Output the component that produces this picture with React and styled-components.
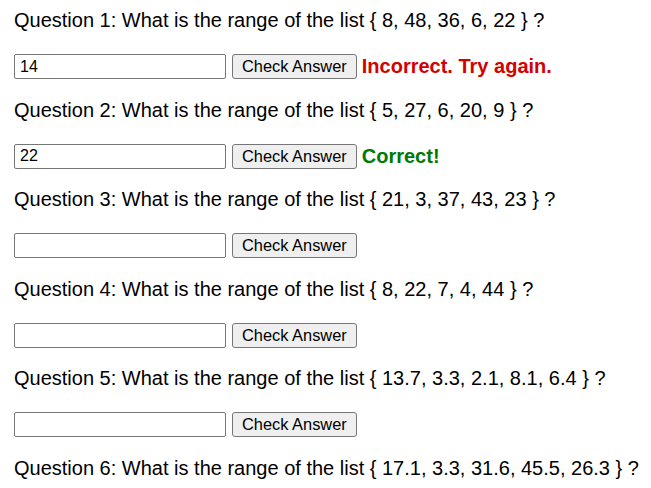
import React from 'react';
import styled, { createGlobalStyle } from 'styled-components';

const GlobalStyle = createGlobalStyle`
  body {
    margin: 0;
    background: #ffffff;
    font-family: "Liberation Sans", Arial, sans-serif;
    color: #000000;
  }
`;

const Page = styled.div`
  padding: 9px 14px;
  display: flex;
  flex-direction: column;
  gap: 19.6px;
`;

const QuestionBlock = styled.div`
  display: flex;
  flex-direction: column;
`;

const QuestionText = styled.div`
  font-size: 20px;
  line-height: 23px;
  margin-bottom: 22px;
  white-space: nowrap;
`;

const AnswerRow = styled.div`
  display: flex;
  align-items: center;
  height: 25px;
`;

const AnswerInput = styled.input`
  box-sizing: border-box;
  width: 212px;
  height: 25px;
  padding: 1px 5px;
  font-family: "Liberation Sans", Arial, sans-serif;
  font-size: 16px;
  color: #000000;
  border: 1px solid #767676;
  border-radius: 2px;
  background: #ffffff;
`;

const CheckButton = styled.button`
  box-sizing: border-box;
  margin-left: 6px;
  height: 25px;
  padding: 0 9px;
  font-family: "Liberation Sans", Arial, sans-serif;
  font-size: 16.4px;
  color: #000000;
  background: #efefef;
  border: 1px solid #767676;
  border-radius: 3px;
`;

const Feedback = styled.span`
  margin-left: 5px;
  font-size: 20px;
  font-weight: bold;
  color: ${(p) => (p.$ok ? '#007a00' : '#d40000')};
`;

const questions = [
  { list: '8, 48, 36, 6, 22', value: '14', result: 'wrong' },
  { list: '5, 27, 6, 20, 9', value: '22', result: 'right' },
  { list: '21, 3, 37, 43, 23', value: '' },
  { list: '8, 22, 7, 4, 44', value: '' },
  { list: '13.7, 3.3, 2.1, 8.1, 6.4', value: '' },
  { list: '17.1, 3.3, 31.6, 45.5, 26.3', value: '', last: true },
];

export default function App() {
  return (
    <>
      <GlobalStyle />
      <Page>
        {questions.map((q, i) => (
          <QuestionBlock key={i}>
            <QuestionText>
              Question {i + 1}: What is the range of the list {'{'} {q.list} {'}'} ?
            </QuestionText>
            {!q.last && (
              <AnswerRow>
                <AnswerInput type="text" defaultValue={q.value} />
                <CheckButton>Check Answer</CheckButton>
                {q.result === 'wrong' && <Feedback>Incorrect. Try again.</Feedback>}
                {q.result === 'right' && <Feedback $ok>Correct!</Feedback>}
              </AnswerRow>
            )}
          </QuestionBlock>
        ))}
      </Page>
    </>
  );
}
